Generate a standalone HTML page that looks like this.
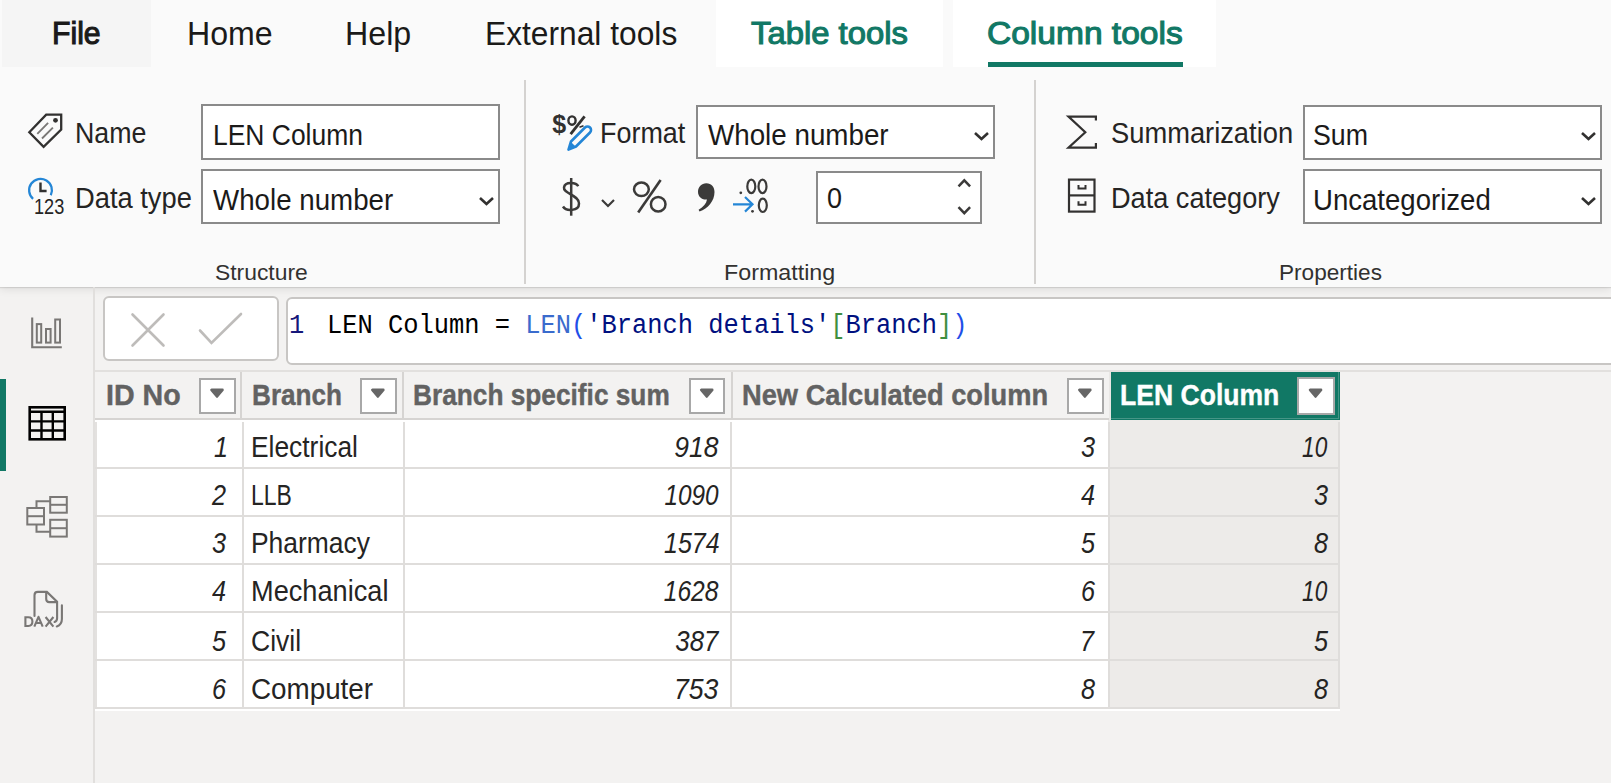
<!DOCTYPE html>
<html><head><meta charset="utf-8">
<style>
*{margin:0;padding:0;box-sizing:border-box}
html,body{width:1611px;height:783px;overflow:hidden;background:#f3f2f1;font-family:"Liberation Sans",sans-serif;color:#252423}
.a{position:absolute}
.t{position:absolute;white-space:nowrap;line-height:1.1172;transform-origin:0 0}
#ribbon{position:absolute;left:0;top:0;width:1611px;height:287px;background:#fafafa;box-shadow:0 1px 1px rgba(0,0,0,0.10),0 3px 8px rgba(0,0,0,0.08)}
.tab{position:absolute;top:0;height:67px}
.lbl{font-size:29px;color:#252423}
.box{position:absolute;background:#fff;border:2px solid #8a8a8a}
.sect{font-size:21.8px;color:#323130}
.div{position:absolute;width:2px;background:#d4d2d0;top:80px;height:203.5px}
.chev{position:absolute}
.th{font-size:29px;font-weight:bold;color:#626262;-webkit-text-stroke:0.4px currentColor;top:calc(405px - 0.9053em)}
.td{font-size:29px;color:#252423}
.num{font-style:italic;transform-origin:100% 0}
.fb{position:absolute;background:#fff;border:2px solid #a8a8a8}
.fb svg{position:absolute;left:-0.2px;top:-0.2px}
.mono{font-family:"Liberation Mono",monospace;font-size:27px;top:calc(333px - 0.8325em);line-height:1.1328;transform:scaleX(0.941)}
.td{transform:scaleX(0.92)}
.num{transform:scaleX(0.87)}
</style></head><body>
<div id="ribbon">
  <div class="tab" style="left:2px;width:149px;background:#f5f5f5"></div>
  <div class="tab" style="left:716px;width:227px;background:#fff"></div>
  <div class="tab" style="left:953px;width:263px;background:#fff"></div>
  <div class="a" style="left:988px;top:62px;width:195px;height:5px;background:#117865"></div>

  <div class="t" id="tFile" style="left:52.15px;top:calc(44.9px - 0.9053em);font-size:31.8px;transform:scaleX(0.9493);font-weight:normal;-webkit-text-stroke:1.1px currentColor;color:#1b1a19">File</div>
  <div class="t" id="tHome" style="left:187.45px;top:calc(45.1px - 0.9053em);font-size:33.5px;color:#1b1a19;transform:scaleX(0.9586)">Home</div>
  <div class="t" id="tHelp" style="left:344.97px;top:calc(45.1px - 0.9053em);font-size:33.5px;color:#1b1a19;transform:scaleX(0.9607)">Help</div>
  <div class="t" id="tExt" style="left:484.99px;top:calc(45.1px - 0.9053em);font-size:33.5px;color:#1b1a19;transform:scaleX(0.9473)">External tools</div>
  <div class="t" id="tTable" style="left:751.04px;transform:scaleX(1.0326);top:calc(44.9px - 0.9053em);font-size:31.8px;font-weight:normal;-webkit-text-stroke:1.1px currentColor;color:#117865">Table tools</div>
  <div class="t" id="tCol" style="left:986.74px;transform:scaleX(1.0544);top:calc(44.9px - 0.9053em);font-size:31.8px;font-weight:normal;-webkit-text-stroke:1.1px currentColor;color:#117865">Column tools</div>

  <!-- Structure -->
  
  <div class="t lbl" id="tName" style="left:75.22px;top:calc(143.0px - 0.9053em);transform:scaleX(0.9229)">Name</div>
  
  <div class="t" id="t123" style="left:34px;top:calc(214.7px - 0.9053em);font-size:22.7px;color:#252423;transform:scaleX(0.8)">123</div>
  <div class="t lbl" id="tDtype" style="left:74.60px;top:calc(207.9px - 0.9053em);transform:scaleX(0.9410)">Data type</div>

  <div class="box" style="left:201px;top:104px;width:299px;height:56px"></div>
  <div class="t lbl" id="tLenIn" style="left:212.85px;transform:scaleX(0.9119);top:calc(144.9px - 0.9053em);color:#1b1a19">LEN Column</div>
  <div class="box" style="left:201px;top:169px;width:299px;height:55px"></div>
  <div class="t lbl" id="tWN1" style="left:212.60px;top:calc(209.8px - 0.9053em);color:#1b1a19;transform:scaleX(0.9555)">Whole number</div>
  <svg class="chev" style="left:478px;top:195px" width="17" height="12" viewBox="0 0 17 12"><path d="M2 3 L8.5 9 L15 3" fill="none" stroke="#323130" stroke-width="2.6"/></svg>
  <div class="t sect" id="tStruct" style="left:215.36px;top:calc(280.3px - 0.9053em);transform:scaleX(1.0490)">Structure</div>
  <div class="div" style="left:524px"></div>

  <!-- Formatting -->
  <div class="t" id="tDollar" style="left:552.3px;top:calc(134px - 0.9053em);font-size:25px;font-weight:bold;color:#323130">$</div>
  <div class="t lbl" id="tFormat" style="left:600.28px;transform:scaleX(0.9284);top:calc(143.0px - 0.9053em)">Format</div>
  <div class="box" style="left:696px;top:105px;width:299px;height:54px"></div>
  <div class="t lbl" id="tWN2" style="left:708.00px;top:calc(144.9px - 0.9053em);color:#1b1a19;transform:scaleX(0.9577)">Whole number</div>
  <svg class="chev" style="left:973px;top:130px" width="17" height="12" viewBox="0 0 17 12"><path d="M2 3 L8.5 9 L15 3" fill="none" stroke="#323130" stroke-width="2.6"/></svg>
  <div class="box" style="left:816px;top:171px;width:166px;height:53px"></div>
  <div class="t lbl" id="tZero" style="left:827.2px;top:calc(207.8px - 0.9053em);color:#1b1a19;transform:scaleX(0.93)">0</div>
  <div class="t sect" id="tFmt" style="left:724.44px;transform:scaleX(1.0677);top:calc(280.3px - 0.9053em)">Formatting</div>
  <div class="div" style="left:1034px"></div>

  <!-- Properties -->
  <div class="t lbl" id="tSumm" style="left:1111.04px;transform:scaleX(0.9414);top:calc(143.0px - 0.9053em)">Summarization</div>
  <div class="box" style="left:1303px;top:105px;width:299px;height:55px"></div>
  <div class="t lbl" id="tSum" style="left:1313.04px;transform:scaleX(0.9216);top:calc(144.9px - 0.9053em);color:#1b1a19">Sum</div>
  <svg class="chev" style="left:1580px;top:130px" width="17" height="12" viewBox="0 0 17 12"><path d="M2 3 L8.5 9 L15 3" fill="none" stroke="#323130" stroke-width="2.6"/></svg>
  <div class="t lbl" id="tDcat" style="left:1111.28px;transform:scaleX(0.9353);top:calc(207.9px - 0.9053em)">Data category</div>
  <div class="box" style="left:1303px;top:169px;width:299px;height:55px"></div>
  <div class="t lbl" id="tUncat" style="left:1313.25px;top:calc(209.8px - 0.9053em);color:#1b1a19;transform:scaleX(0.9503)">Uncategorized</div>
  <svg class="chev" style="left:1580px;top:195px" width="17" height="12" viewBox="0 0 17 12"><path d="M2 3 L8.5 9 L15 3" fill="none" stroke="#323130" stroke-width="2.6"/></svg>
  <div class="t sect" id="tProp" style="left:1278.93px;top:calc(280.3px - 0.9053em);transform:scaleX(1.0360)">Properties</div>
</div>

<svg class="a" style="left:0;top:0;z-index:5" width="1611" height="783" viewBox="0 0 1611 783">
<!-- tag -->
<path d="M29.3 132.2 L46.2 114.6 L61.2 114.6 L61.2 129.6 L43.6 146.9 Z" fill="none" stroke="#323130" stroke-width="2.3"/>
<circle cx="55.5" cy="120.3" r="2.4" fill="#323130"/>
<path d="M37.3 133.8 L48.1 122.9 M42 138.5 L52.9 127.7" stroke="#7a7876" stroke-width="1.9"/>
<!-- clock -->
<path d="M33.09 198.82 A11.4 11.4 0 1 1 50.79 195.2" fill="none" stroke="#2486d6" stroke-width="2.3"/>
<path d="M40.5 182.6 L40.5 191 L46.6 191" fill="none" stroke="#323130" stroke-width="2.4"/>
<!-- $% pencil -->
<path d="M570.6 134.2 L584.6 116.3" stroke="#323130" stroke-width="2.8"/>
<ellipse cx="572" cy="120.6" rx="3.6" ry="4.2" fill="none" stroke="#323130" stroke-width="2.4"/>
<path d="M579.5 127.2 L583.5 125.8" stroke="#323130" stroke-width="1.6"/>
<path d="M568.5 149.6 L571 141.5 L585 127.5 A3.2 3.2 0 0 1 590 132.5 L576 146.5 Z" fill="none" stroke="#2486d6" stroke-width="2.6" stroke-linejoin="round"/>
<path d="M568 150 L571 142 L575.5 146.5 Z" fill="#2486d6"/>
<!-- $ large -->
<path d="M578.2 186.2 C576.5 182.5 565 181 564 187.5 C563 193.5 579 195 579 203.5 C579 211.5 566 211.5 563 206.5" fill="none" stroke="#3b3a39" stroke-width="2.5"/>
<path d="M571.2 178 L571.2 215.7" stroke="#3b3a39" stroke-width="2.5"/>
<!-- small chevron -->
<path d="M602 200 L608 206 L614 200" fill="none" stroke="#3b3a39" stroke-width="2.2"/>
<!-- percent -->
<path d="M638.2 212.5 L660.6 180" stroke="#3b3a39" stroke-width="2.6"/>
<ellipse cx="641.4" cy="189.3" rx="7.4" ry="6.8" fill="none" stroke="#3b3a39" stroke-width="2.5"/>
<ellipse cx="658.2" cy="204.3" rx="7.3" ry="7.3" fill="none" stroke="#3b3a39" stroke-width="2.5"/>
<!-- comma -->
<path d="M706.3 183.2 C711.5 183.2 714.5 187 714.5 192 C714.5 201 708 208.5 699.5 211.5 L698.6 209.8 C703.5 207 706.3 203.5 707 199.5 C701.5 200 698 196.5 698 191.7 C698 187 701.5 183.2 706.3 183.2 Z" fill="#3b3a39"/>
<!-- .00 .0 arrow -->
<circle cx="740.8" cy="192.8" r="1.4" fill="#3b3a39"/>
<ellipse cx="751.3" cy="186.4" rx="4" ry="6.7" fill="none" stroke="#3b3a39" stroke-width="2.2"/>
<ellipse cx="762.5" cy="186.4" rx="4" ry="6.7" fill="none" stroke="#3b3a39" stroke-width="2.2"/>
<circle cx="752.5" cy="211.3" r="1.4" fill="#3b3a39"/>
<ellipse cx="762.8" cy="205.3" rx="4" ry="6.7" fill="none" stroke="#3b3a39" stroke-width="2.2"/>
<path d="M733 204.3 L752.5 204.3 M745 197 L752.5 204.3 L745 211.6" fill="none" stroke="#2486d6" stroke-width="2.2"/>
<!-- spin chevrons -->
<path d="M958.5 186.3 L964.3 180.3 L970.1 186.3" fill="none" stroke="#3b3a39" stroke-width="2.5"/>
<path d="M958.5 207.2 L964.3 213.2 L970.1 207.2" fill="none" stroke="#3b3a39" stroke-width="2.5"/>
<!-- sigma -->
<path d="M1095.9 120.5 L1095.9 116.6 L1068.5 116.6 L1085.3 132.2 L1068.5 147.7 L1095.9 147.7 L1095.9 143" fill="none" stroke="#323130" stroke-width="2.2"/>
<!-- cabinet -->
<rect x="1069" y="179.6" width="25.5" height="32" fill="none" stroke="#323130" stroke-width="2.2"/>
<path d="M1069 195.4 L1094.5 195.4" stroke="#323130" stroke-width="2.2"/>
<path d="M1078.5 185 L1078.5 188.6 L1085.5 188.6 L1085.5 185 M1078.5 201.2 L1078.5 204.8 L1085.5 204.8 L1085.5 201.2" fill="none" stroke="#323130" stroke-width="2"/>
<!-- formula cancel / commit -->
<path d="M132.5 314.5 L163.5 345.5 M163.5 314.5 L132.5 345.5" stroke="#bebcba" stroke-width="2.6" stroke-linecap="round"/>
<path d="M200 330.5 L211.5 343 L241 314" fill="none" stroke="#bebcba" stroke-width="2.6" stroke-linecap="round"/>
<!-- nav report icon -->
<path d="M32.2 317.5 L32.2 347.2 L61.8 347.2" fill="none" stroke="#797775" stroke-width="2.1"/>
<rect x="36.8" y="324.1" width="4.4" height="18.5" fill="none" stroke="#797775" stroke-width="2"/>
<rect x="46" y="329" width="4.6" height="13.6" fill="none" stroke="#797775" stroke-width="2"/>
<rect x="55.2" y="319.5" width="4.8" height="23.1" fill="none" stroke="#797775" stroke-width="2"/>
<!-- nav table icon -->
<rect x="29.7" y="407.3" width="35" height="32" fill="none" stroke="#000" stroke-width="2.6"/>
<path d="M29.7 411.7 L64.7 411.7 M29.7 421.4 L64.7 421.4 M29.7 430.5 L64.7 430.5 M41.5 411.7 L41.5 439.3 M52.8 411.7 L52.8 439.3" fill="none" stroke="#000" stroke-width="2.4"/>
<!-- nav model icon -->
<rect x="27.3" y="508" width="16.7" height="16.5" fill="none" stroke="#7a7876" stroke-width="2"/>
<path d="M27.3 516.2 L44 516.2" stroke="#7a7876" stroke-width="2"/>
<rect x="50.2" y="497" width="16.6" height="15.7" fill="none" stroke="#7a7876" stroke-width="2"/>
<path d="M50.2 504.8 L66.8 504.8" stroke="#7a7876" stroke-width="2"/>
<rect x="50.2" y="519.8" width="16.6" height="16.8" fill="none" stroke="#7a7876" stroke-width="2"/>
<path d="M50.2 528.2 L66.8 528.2" stroke="#7a7876" stroke-width="2"/>
<path d="M36.5 508 L36.5 501.2 L50.2 501.2 M36.5 524.5 L36.5 531.8 L50.2 531.8" fill="none" stroke="#7a7876" stroke-width="2"/>
<!-- nav DAX icon -->
<path d="M34.5 615.9 L34.5 595.2 Q34.5 591.9 37.8 591.9 L46.9 591.9 L57.1 601.8 L57.1 618.2 Q57.1 621 54.6 622" fill="none" stroke="#797775" stroke-width="2.1" stroke-linecap="round"/>
<path d="M46.2 592.3 L46.2 599 Q46.2 602.1 49.3 602.1 L57 602.1" fill="none" stroke="#797775" stroke-width="2.1"/>
<path d="M61.9 605.3 L61.9 619 Q61.9 624.8 56.8 626.4" fill="none" stroke="#797775" stroke-width="2.1" stroke-linecap="round"/>
<path d="M25.4 617.2 L25.4 626 L28.3 626 Q32.4 626 32.4 621.6 Q32.4 617.2 28.3 617.2 Z" fill="none" stroke="#797775" stroke-width="2.1"/>
<path d="M34.3 626.6 L38.5 616.8 L42.7 626.6 M36 623 L41 623" fill="none" stroke="#797775" stroke-width="2.1" stroke-linejoin="round"/>
<path d="M45.6 617 L53.4 626.6 M53.4 617 L45.6 626.6" fill="none" stroke="#797775" stroke-width="2.1"/>
</svg>
<!-- left nav -->
<div class="a" style="left:93px;top:287px;width:2px;height:496px;background:#e1dfdd"></div>
<div class="a" style="left:0;top:379px;width:6px;height:92px;background:#117865"></div>

<!-- formula bar -->
<div class="a" style="left:103px;top:296px;width:176px;height:65px;background:#fff;border:2px solid #c8c6c4;border-radius:6px"></div>
<div class="a" style="left:286px;top:297px;width:1340px;height:68px;background:#fff;border:2px solid #c8c6c4;border-radius:6px"></div>

<!-- formula content -->


<div class="t mono" id="fLn" style="left:289px;color:#16187a">1</div>
<div class="t mono" id="fCode" style="left:327px"><span style="color:#000">LEN Column = </span><span style="color:#3a6bcd">LEN</span><span style="color:#1f4fe8">(</span><span style="color:#001080">'Branch details'</span><span style="color:#3f8f3f">[</span><span style="color:#001080">Branch</span><span style="color:#3f8f3f">]</span><span style="color:#1f4fe8">)</span></div>
<!-- table -->

<div class="a" style="left:95px;top:418px;width:1016px;height:2px;background:#d6d4d2"></div>
<div class="a" style="left:240px;top:371px;width:2px;height:47px;background:#d6d4d2"></div>
<div class="a" style="left:402px;top:371px;width:2px;height:47px;background:#d6d4d2"></div>
<div class="a" style="left:731px;top:371px;width:2px;height:47px;background:#d6d4d2"></div>
<div class="a" style="left:1109px;top:371px;width:2px;height:49px;background:#e9e7e5"></div>
<div class="a" style="left:1111px;top:370px;width:229px;height:50px;background:#117865"></div>
<div class="a" style="left:95px;top:370px;width:1516px;height:1.5px;background:#e2e0de;z-index:2"></div>
<div class="a" style="left:1338.3px;top:371.5px;width:1px;height:47px;background:rgba(255,255,255,0.22)"></div>
<div class="a" style="left:1111px;top:418px;width:227px;height:1px;background:rgba(255,255,255,0.22)"></div>
<div class="a" style="left:95px;top:420px;width:1245px;height:291px;background:#fff"></div>
<div class="a" style="left:1108px;top:420px;width:232px;height:289px;background:#edebe9"></div>
<div class="a" style="left:95px;top:422px;width:2px;height:287px;background:#e3e1df"></div>
<div class="a" style="left:95px;top:467px;width:1245px;height:2px;background:#dfdddb"></div>
<div class="a" style="left:95px;top:515px;width:1245px;height:2px;background:#dfdddb"></div>
<div class="a" style="left:95px;top:563px;width:1245px;height:2px;background:#dfdddb"></div>
<div class="a" style="left:95px;top:611px;width:1245px;height:2px;background:#dfdddb"></div>
<div class="a" style="left:95px;top:659px;width:1245px;height:2px;background:#dfdddb"></div>
<div class="a" style="left:95px;top:707px;width:1245px;height:2px;background:#dfdddb"></div>
<div class="a" style="left:242px;top:422px;width:2px;height:287px;background:#dfdddb"></div>
<div class="a" style="left:403px;top:422px;width:2px;height:287px;background:#dfdddb"></div>
<div class="a" style="left:730px;top:422px;width:2px;height:287px;background:#dfdddb"></div>
<div class="a" style="left:1108px;top:422px;width:2px;height:287px;background:#dfdddb"></div>
<div class="a" style="left:1338px;top:422px;width:2px;height:287px;background:#dfdddb"></div>
<div class="t th" id="hID" style="left:105.92px;transform:scaleX(0.9865)">ID No</div>
<div class="t th" id="hBr" style="left:252.22px;transform:scaleX(0.9017)">Branch</div>
<div class="t th" id="hBss" style="left:413.11px;transform:scaleX(0.9051)">Branch specific sum</div>
<div class="t th" id="hNcc" style="left:742.10px;transform:scaleX(0.9406)">New Calculated column</div>
<div class="t th" id="hLen" style="left:1119.61px;color:#fff;transform:scaleX(0.9158)">LEN Column</div>
<div class="fb" style="left:199.3px;top:377.6px;width:36.8px;height:36.8px"><svg width="40" height="40" viewBox="0 0 40 40"><path d="M10.50 10.90 L21.50 10.90 L16.00 17.50 Z" fill="#666" stroke="#666" stroke-width="2.6" stroke-linejoin="round"/></svg></div>
<div class="fb" style="left:360.3px;top:377.6px;width:36.5px;height:36.8px"><svg width="40" height="40" viewBox="0 0 40 40"><path d="M10.35 10.90 L21.35 10.90 L15.85 17.50 Z" fill="#666" stroke="#666" stroke-width="2.6" stroke-linejoin="round"/></svg></div>
<div class="fb" style="left:688.7px;top:377.6px;width:36.3px;height:36.8px"><svg width="40" height="40" viewBox="0 0 40 40"><path d="M10.25 10.90 L21.25 10.90 L15.75 17.50 Z" fill="#666" stroke="#666" stroke-width="2.6" stroke-linejoin="round"/></svg></div>
<div class="fb" style="left:1067.2px;top:377.6px;width:36.5px;height:36.8px"><svg width="40" height="40" viewBox="0 0 40 40"><path d="M10.35 10.90 L21.35 10.90 L15.85 17.50 Z" fill="#666" stroke="#666" stroke-width="2.6" stroke-linejoin="round"/></svg></div>
<div class="fb" style="left:1297.0px;top:377.0px;width:37.9px;height:37.9px"><svg width="40" height="40" viewBox="0 0 40 40"><path d="M11.05 10.90 L22.05 10.90 L16.55 17.50 Z" fill="#666" stroke="#666" stroke-width="2.6" stroke-linejoin="round"/></svg></div>
<div class="t td num" id="d0a" style="right:1382.50px;top:calc(457.5px - 0.9053em);transform:scaleX(0.8700)">1</div>
<div class="t td" id="d0b" style="left:251.30px;top:calc(457.5px - 0.9053em);transform:scaleX(0.9090)">Electrical</div>
<div class="t td num" id="d0c" style="right:892.35px;top:calc(457.5px - 0.9053em);transform:scaleX(0.9114)">918</div>
<div class="t td num" id="d0d" style="right:515.50px;top:calc(457.5px - 0.9053em);transform:scaleX(0.8700)">3</div>
<div class="t td num" id="d0e" style="right:283.30px;top:calc(457.5px - 0.9053em);transform:scaleX(0.7802)">10</div>
<div class="t td num" id="d1a" style="right:1384.50px;top:calc(505.5px - 0.9053em);transform:scaleX(0.8700)">2</div>
<div class="t td" id="d1b" style="left:251.40px;top:calc(505.5px - 0.9053em);transform:scaleX(0.7908)">LLB</div>
<div class="t td num" id="d1c" style="right:892.30px;top:calc(505.5px - 0.9053em);transform:scaleX(0.8375)">1090</div>
<div class="t td num" id="d1d" style="right:515.50px;top:calc(505.5px - 0.9053em);transform:scaleX(0.8700)">4</div>
<div class="t td num" id="d1e" style="right:282.40px;top:calc(505.5px - 0.9053em);transform:scaleX(0.8700)">3</div>
<div class="t td num" id="d2a" style="right:1384.50px;top:calc(553.5px - 0.9053em);transform:scaleX(0.8700)">3</div>
<div class="t td" id="d2b" style="left:251.30px;top:calc(553.5px - 0.9053em);transform:scaleX(0.9111)">Pharmacy</div>
<div class="t td num" id="d2c" style="right:891.30px;top:calc(553.5px - 0.9053em);transform:scaleX(0.8605)">1574</div>
<div class="t td num" id="d2d" style="right:515.50px;top:calc(553.5px - 0.9053em);transform:scaleX(0.8700)">5</div>
<div class="t td num" id="d2e" style="right:282.40px;top:calc(553.5px - 0.9053em);transform:scaleX(0.8700)">8</div>
<div class="t td num" id="d3a" style="right:1384.50px;top:calc(601.5px - 0.9053em);transform:scaleX(0.8700)">4</div>
<div class="t td" id="d3b" style="left:251.26px;top:calc(601.5px - 0.9053em);transform:scaleX(0.9370)">Mechanical</div>
<div class="t td num" id="d3c" style="right:892.30px;top:calc(601.5px - 0.9053em);transform:scaleX(0.8498)">1628</div>
<div class="t td num" id="d3d" style="right:515.50px;top:calc(601.5px - 0.9053em);transform:scaleX(0.8700)">6</div>
<div class="t td num" id="d3e" style="right:283.30px;top:calc(601.5px - 0.9053em);transform:scaleX(0.7802)">10</div>
<div class="t td num" id="d4a" style="right:1384.50px;top:calc(651.5px - 0.9053em);transform:scaleX(0.8700)">5</div>
<div class="t td" id="d4b" style="left:251.21px;top:calc(651.5px - 0.9053em);transform:scaleX(0.9156)">Civil</div>
<div class="t td num" id="d4c" style="right:893.11px;top:calc(651.5px - 0.9053em);transform:scaleX(0.8898)">387</div>
<div class="t td num" id="d4d" style="right:516.50px;top:calc(651.5px - 0.9053em);transform:scaleX(0.8700)">7</div>
<div class="t td num" id="d4e" style="right:282.40px;top:calc(651.5px - 0.9053em);transform:scaleX(0.8700)">5</div>
<div class="t td num" id="d5a" style="right:1384.50px;top:calc(699px - 0.9053em);transform:scaleX(0.8700)">6</div>
<div class="t td" id="d5b" style="left:251.14px;top:calc(699px - 0.9053em);transform:scaleX(0.9586)">Computer</div>
<div class="t td num" id="d5c" style="right:892.36px;top:calc(699px - 0.9053em);transform:scaleX(0.9180)">753</div>
<div class="t td num" id="d5d" style="right:515.50px;top:calc(699px - 0.9053em);transform:scaleX(0.8700)">8</div>
<div class="t td num" id="d5e" style="right:282.40px;top:calc(699px - 0.9053em);transform:scaleX(0.8700)">8</div>

</body></html>
